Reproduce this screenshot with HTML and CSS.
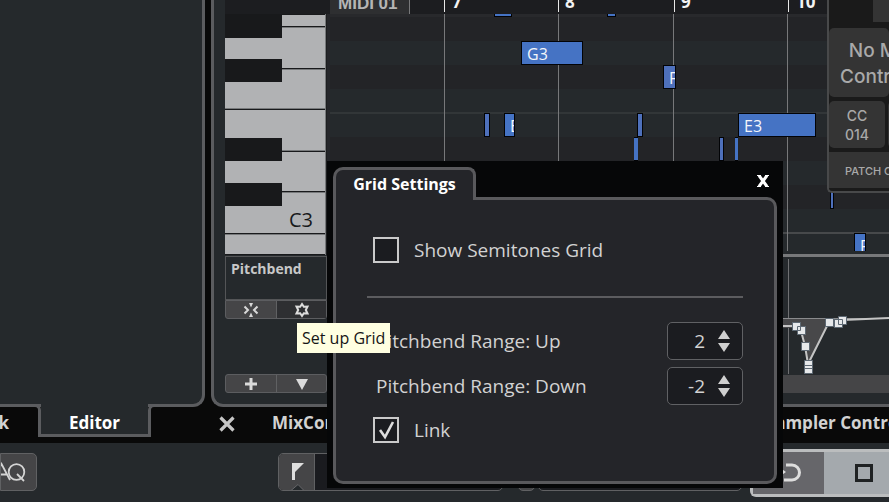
FILE: index.html
```html
<!DOCTYPE html>
<html lang="en">
<head>
<meta charset="utf-8">
<title>Key Editor</title>
<link rel="stylesheet" href="styles.css">
</head>
<body>
<main class="workspace">
  <section class="dock dock-left">
    <div class="dock-body"></div>
    <nav class="dock-tabs">
      <button class="tab tab-prev">Track</button>
      <button class="tab tab-active">Editor</button>
      <span class="tab-rest"></span>
    </nav>
  </section>
  <section class="dock dock-right">
    <div class="editor">
      <div class="ruler">
        <span class="part-name">MIDI 01</span>
        <svg class="ruler-scale" width="480" height="14" aria-hidden="true">
          <g fill="#e8e8e8"><path d="M34 0h1v12h-1zM148 0h1v12h-1zM264 0h1v12h-1zM378 0h1v12h-1z"/></g>
          <g class="ruler-num"><text x="42" y="8">7</text><text x="155" y="8">8</text><text x="271" y="8">9</text><text x="386" y="8">10</text></g>
        </svg>
      </div>
      <svg class="keys" width="102" height="241" aria-label="Piano keyboard">
        <path fill="#b1b2b4" d="M0 0h102v241H0z"/>
        <path fill="#18191b" d="M0 0h102v1H0zM57 12h45v1H57zM57 54h45v1H57zM0 95h102v1H0zM57 137h45v1H57zM57 177h45v1H57zM0 219h102v1H0zM0 240h102v1H0z"/>
        <path fill="#77797b" d="M57 13h45v1H57zM57 55h45v1H57zM0 94h102v1H0zM57 136h45v1H57zM57 178h45v1H57zM0 220h102v1H0zM100 0h1v241h-1z"/>
        <path fill="#1d1e20" d="M101 0h1v241h-1z"/>
        <path fill="#18191b" d="M0 1h57v23H0zM0 45h57v23H0zM0 124h57v23H0zM0 169h57v23H0z"/>
        <text class="key-name" x="64" y="213">C3</text>
      </svg>
      <div class="roll">
        <i class="bar" style="left:118px"></i><i class="bar" style="left:232px"></i><i class="bar" style="left:347px"></i><i class="bar" style="left:461px"></i>
        <span class="note note-cut" style="left:167px;top:-8px;width:18px;height:11px"></span>
        <span class="note note-cut" style="left:280px;top:-8px;width:9px;height:11px"></span>
        <span class="note" style="left:194px;top:27px;width:62px">G3</span>
        <span class="note note-soft" style="left:336px;top:51px;width:13px">F3</span>
        <span class="note note-plain" style="left:157px;top:99px;width:6px"></span>
        <span class="note" style="left:177px;top:99px;width:11px">E3</span>
        <span class="note note-plain" style="left:310px;top:99px;width:6px"></span>
        <span class="note note-flat" style="left:307px;top:123px;width:4px"></span>
        <span class="note" style="left:411px;top:99px;width:78px">E3</span>
        <span class="note note-plain" style="left:392px;top:123px;width:5px"></span>
        <span class="note note-flat" style="left:408px;top:123px;width:3px"></span>
        <span class="note note-plain" style="left:503px;top:171px;width:4px"></span>
        <span class="note" style="left:527px;top:219px;width:12px">F2</span>
      </div>
      <div class="lane-head">
        <div class="lane-name">Pitchbend</div>
        <div class="pair">
          <button aria-label="Snap pitchbend events"><svg width="16" height="16" viewBox="0 0 16 16" fill="none" stroke="#d8d8d8" stroke-width="2"><path d="M1.500 4.500L5 8l-3.500 3.500M14.500 4.500L11 8l3.500 3.500"/><path fill="#d8d8d8" stroke="none" d="M6 1h4L8 5.500zM6 15h4L8 10.500z"/></svg></button>
          <button class="dark" aria-label="Set up Grid"><svg width="16" height="16" viewBox="0 0 16 16"><path fill="none" stroke="#dcdcdc" stroke-width="2" d="M8 2l1.800 2.700 3.700-.2L11.800 8l1.700 3.500-3.700-.2L8 14l-1.800-2.700-3.700.2L4.200 8 2.500 4.500l3.700.2z"/></svg></button>
        </div>
        <div class="pair pair-end">
          <button aria-label="Add lane"><svg width="14" height="14"><path fill="#dadada" d="M5.500 1h3v4.500H13v3H8.500V13h-3V8.500H1v-3h4.500z"/></svg></button>
          <button aria-label="Lane menu"><svg width="14" height="14"><path fill="#dadada" d="M1 2h12L7 13z"/></svg></button>
        </div>
      </div>
      <div class="lane">
        <svg class="curve" width="562" height="115" aria-hidden="true">
          <path fill="#6f7072" d="M461 0h1v115h-1z"/>
          <path fill="#48484a" d="M455 59h64l-8 5h-9l-21 43-3-18-4-15-5-5h-14z"/>
          <path stroke="#8a8b8d" d="M0 59.500h562"/>
          <path fill="none" stroke="#c4c4c4" stroke-width="2" d="M440 67h29l5 5 4 15 3 18 21-42 9 1 5-3 46-2"/>
          <g fill="#e6e8ea" stroke="#5d6873"><path d="M465.500 63.500h8v8h-8zM470.500 67.500h8v8h-8zM474.500 83.500h8v8h-8zM477.500 106.500h8v8h-8zM477.500 101.500h8v8h-8zM498.500 59.500h8v8h-8zM507.500 60.500h8v8h-8zM511.500 57.500h8v8h-8z"/></g>
        </svg>
        <div class="scroll"></div>
      </div>
    </div>
    <nav class="zone-tabs">
      <button class="close-zone" aria-label="Close zone"><svg width="16" height="16"><path stroke="#c6c6c6" stroke-width="3.200" d="M1.500 1.500l13 13M14.500 1.500l-13 13"/></svg></button>
      <button class="zone-tab">MixConsole</button>
      <button class="zone-tab zone-sampler">Sampler Control</button>
    </nav>
  </section>
</main>
<footer class="transport">
  <button class="aq" aria-label="Automatic quantize"><svg width="42" height="26" fill="none" stroke="#d4d4d4" stroke-width="1.800"><path d="M2 20L10.500 4 19 20M5.500 14.500h10"/><circle cx="25.500" cy="12" r="7.800"/><path d="M26 14l7 7"/></svg></button>
  <div class="locator">
    <button class="flag" aria-label="Left locator"><svg width="36" height="36"><path fill="#dedede" d="M13 9h12l-9 9v8h-3z"/><path fill="#25292c" stroke="#66676a" d="M12 36.500l7-6 6 6"/></svg></button>
    <span class="readout"></span>
  </div>
  <span class="knob"></span>
  <div class="readout-wide"></div>
  <div class="play-group">
    <button class="cycle" aria-label="Cycle"><svg width="40" height="24"><path fill="none" stroke="#ddd" stroke-width="3" d="M17 4h6a7.500 7.500 0 0 1 0 15h-8"/><path fill="#ddd" d="M10 6l7 5-7 5z"/></svg></button>
    <button class="stop" aria-label="Stop"><svg width="18" height="18"><path fill="none" stroke="#1f2223" stroke-width="3" d="M1.500 1.500h15v15h-15z"/></svg></button>
  </div>
</footer>

<aside class="controller">
  <div class="ctl-top"><span></span></div>
  <div class="ctl-display"><p>No MIDI<br>Controller</p></div>
  <div class="ctl-keys"><button>CC<br>014</button><button>CC<br>015</button></div>
  <div class="ctl-foot">PATCH CHANGE</div>
</aside>

<form class="dialog" aria-labelledby="dlg-title">
  <header class="dlg-head">
    <h1 class="dlg-tab" id="dlg-title">Grid Settings</h1>
    <button type="button" class="dlg-close" aria-label="Close"><svg width="12" height="12" viewBox="0 0 12 12"><path stroke="#fff" stroke-width="3" d="M2 .5l8 11M10 .5l-8 11"/><path stroke="#fff" d="M0 .5h4M8 .5h4M0 11.500h4M8 11.500h4"/></svg></button>
  </header>
  <div class="dlg-body">
    <label class="check check-first"><input type="checkbox">Show Semitones Grid</label>
    <hr>
    <div class="field"><label for="up">Pitchbend Range: Up</label><span class="spin"><input id="up" type="text" value="2"><svg width="14" height="24"><path fill="#cfcfcf" d="M1 10L7 1l6 9zM1 14l6 9 6-9z"/></svg></span></div>
    <div class="field"><label for="down">Pitchbend Range: Down</label><span class="spin"><input id="down" type="text" value="-2"><svg width="14" height="24"><path fill="#cfcfcf" d="M1 10L7 1l6 9zM1 14l6 9 6-9z"/></svg></span></div>
    <label class="check check-last"><input type="checkbox" checked><svg class="tick" width="18" height="20"><path fill="none" stroke="#ddd" stroke-width="2.600" d="M2 10l5 7L15 2"/></svg>Link</label>
  </div>
</form>
<div class="tooltip" role="tooltip">Set up Grid</div>
</body>
</html>
```
FILE: styles.css
```css
* { box-sizing: border-box; }
body {
  margin: 0;
  background: #090909;
  color: #d2d2d2;
  font-family: "Open Sans", "Noto Sans", sans-serif;
  overflow: hidden;
}
button { border: 0; padding: 0; margin: 0; background: none; color: inherit; font: inherit; }
svg { display: block; flex: none; }

.workspace { display: flex; gap: 6px; }
.dock-left { width: 205px; flex: none; }
.dock-body {
  height: 407px;
  background: #25292c;
  border: solid #5b5c5f;
  border-width: 0 3px 3px 0;
  border-radius: 0 0 12px 0;
}
.dock-tabs { display: flex; height: 33px; margin-top: -3px; font-size: 17px; font-weight: 700; }
.tab { line-height: 32px; }
.tab-prev {
  width: 41px;
  display: flex;
  justify-content: flex-end;
  padding-right: 29px;
  background: #090909;
  border: solid #5b5c5f;
  border-width: 3px 3px 0 0;
  border-radius: 0 6px 0 0;
}
.tab-active {
  width: 107px;
  padding-top: 3px;
  background: #25292c;
  border-bottom: 3px solid #5b5c5f;
  color: #fff;
}
.tab-rest {
  width: 20px;
  background: #090909;
  border: solid #5b5c5f;
  border-width: 3px 0 0 3px;
  border-radius: 6px 0 0 0;
}

.dock-right { flex: 1; min-width: 0; }
.editor {
  display: grid;
  grid-template-columns: 102px 1fr;
  grid-template-rows: 14px 241px 138px;
  padding: 0 0 11px 11px;
  background: #25292c;
  border: solid #5b5c5f;
  border-width: 0 0 3px 3px;
  border-radius: 0 0 0 12px;
}
.ruler { grid-column: 1 / 3; display: flex; background: #1c1d20; overflow: hidden; padding-left: 105px; }
.part-name {
  width: 80px;
  flex: none;
  padding-left: 8px;
  background: #2e2f31;
  border-right: 1px solid #77787a;
  color: #b5b5b5;
  font: 700 17px/24px "Liberation Sans", sans-serif;
  margin-top: -8px;
}
.ruler-num { font-size: 17px; font-weight: 700; fill: #f2f2f2; }
.key-name { font-size: 20px; fill: #18191b; }

.roll {
  position: relative;
  overflow: hidden;
  height: 237px;
  border-left: 3px solid #25262a;
  background: linear-gradient(
    #28292c 3px, #232427 3px 27px, #25292c 27px 51px, #232427 51px 75px, #25292c 75px 98px,
    #323638 98px 100px, #25292c 100px 123px, #232427 123px 147px, #25292c 147px 171px,
    #232427 171px 195px, #25292c 195px 218px, #47494b 218px 220px, #25292c 220px);
}
.bar { position: absolute; top: 0; bottom: 0; width: 1px; margin-left: -4px; background: #77787a; }
.note {
  position: absolute;
  height: 24px;
  margin-left: -3px;
  padding-left: 5px;
  overflow: hidden;
  background: #4573c4;
  border: 1px solid #020306;
  color: #f4f6fa;
  font-size: 16px;
  line-height: 24px;
}
.note-soft, .note-plain { background: #4e70bb; }
.note-plain { padding: 0; }
.note-flat { padding: 0; border-width: 1px 0; }
.note-cut { padding: 0; }

.lane-head { display: flex; flex-direction: column; padding-top: 1px; }
.lane-name {
  height: 44px;
  padding-left: 5px;
  border: 1px solid #545557;
  color: #c8c8c8;
  font-size: 14px;
  font-weight: 700;
  line-height: 24px;
}
.pair { display: grid; grid-template-columns: 1fr 1fr; height: 19px; background: #454547; border: 1px solid #5c5d60; border-radius: 0 0 3px 3px; }
.pair button { display: grid; place-items: center; min-height: 0; }
.pair button + button { border-left: 1px solid #606163; }
.pair .dark { background: #2e2f32; }
.pair-end { margin-top: auto; border-radius: 3px; }

.lane { display: flex; flex-direction: column; justify-content: space-between; overflow: hidden; border-top: 3px solid #77787a; margin-top: -1px; }
.curve { margin-top: 2px; }
.scroll { height: 18px; background: #454547; }

.zone-tabs { display: flex; align-items: center; height: 36px; padding-left: 8px; font-size: 17px; font-weight: 700; white-space: nowrap; }
.zone-tab { margin: -4px 0 0 37px; line-height: 32px; }
.zone-sampler { margin-left: 396px; }
.close-zone { margin-top: -2px; }

.transport { display: flex; align-items: flex-start; height: 59px; background: #25292c; }
.aq {
  width: 37px;
  height: 38px;
  margin-top: 10px;
  display: flex;
  justify-content: flex-end;
  align-items: center;
  background: #454547;
  border: 1px solid #606163;
  border-radius: 0 5px 5px 0;
  overflow: hidden;
}
.aq svg { margin: 2px 3px 0 0; }
.locator { display: flex; width: 225px; height: 38px; margin: 10px 0 0 241px; background: #1a1b1f; border: 1px solid #606163; border-radius: 5px; }
.flag { width: 36px; background: #454547; border-right: 1px solid #606163; border-radius: 4px 0 0 4px; }
.knob { width: 17px; height: 38px; margin: 10px 3px 0 15px; background: #454547; border: 1px solid #606163; border-radius: 5px; }
.readout-wide { width: 204px; height: 38px; margin-top: 10px; background: #1a1b1f; border: 1px solid #606163; border-radius: 5px; }
.play-group { flex: 1; display: flex; height: 48px; margin: 6px 0 0 8px; border: solid #bbbdbe; border-width: 3px 0 3px 3px; border-radius: 6px 0 0 6px; }
.cycle { width: 71px; background: #66666a; display: grid; place-items: center; }
.stop { flex: 1; background: #a4a9ad; padding-left: 31px; }

.controller {
  position: absolute;
  left: 827px;
  right: 0;
  top: 0;
  height: 193px;
  overflow: hidden;
  background: #1a1a1a;
  border: solid #48494a;
  border-width: 0 0 2px 2px;
  border-radius: 0 0 0 5px;
  color: #a9a9a9;
  font-family: Inter, Roboto, sans-serif;
  font-weight: 500;
  white-space: nowrap;
}
.ctl-top { height: 28px; padding-left: 44px; }
.ctl-top span { display: block; height: 22px; background: #343434; }
.ctl-display { height: 69px; padding-top: 10px; background: #343434; border-radius: 5px; font-size: 19px; line-height: 26px; }
.ctl-display p { width: 112px; margin: 0; text-align: center; }
.ctl-keys { display: flex; gap: 3px; margin: 4px 0; }
.ctl-keys button { flex: none; width: 56px; height: 47px; border-radius: 5px; background: #343434; font-size: 14px; line-height: 19px; }
.ctl-foot { height: 36px; padding-left: 16px; background: #343434; font-size: 11px; line-height: 38px; }

.dialog { position: absolute; left: 327px; top: 161px; width: 456px; padding: 6px 6px 4px; background: #060708; font-size: 19px; }
.dlg-head { display: flex; justify-content: space-between; height: 30px; }
.dlg-tab {
  position: relative;
  z-index: 1;
  width: 143px;
  height: 33px;
  margin: 0;
  background: #242529;
  border: solid #59595c;
  border-width: 3px 3px 0 3px;
  border-radius: 10px 8px 0 0;
  color: #fff;
  font-size: 16px;
  line-height: 28px;
  text-align: center;
  white-space: nowrap;
}
.dlg-close { width: 12px; height: 12px; margin: 8px 8px 0 0; }
.dlg-body { height: 287px; padding: 37px 31px 0; background: #242529; border: 3px solid #59595c; border-radius: 0 10px 10px 10px; }
.check { display: flex; align-items: center; gap: 15px; height: 26px; margin: 5px 0 0 6px; position: relative; }
.check-first { margin-top: 0; }
.check input { appearance: none; width: 26px; height: 26px; margin: 0; background: #1b1c20; border: 2px solid #cacaca; }
.tick { position: absolute; left: 5px; top: 3px; }
hr { height: 2px; margin: 33px 0 23px; border: 0; background: #5c5c5f; }
.field { display: flex; align-items: center; justify-content: space-between; height: 39px; margin-bottom: 6px; padding-left: 9px; }
.check-last { margin-top: 12px; }
.spin { display: flex; align-items: center; width: 76px; height: 38px; padding-right: 11px; background: #1b1c20; border: 1px solid #606164; border-radius: 5px; }
.spin input { flex: 1; width: 0; min-width: 0; padding: 0 12px 0 0; border: 0; background: none; color: #d2d2d2; font: inherit; text-align: right; }
.tooltip { position: absolute; left: 297px; top: 323px; width: 93px; height: 30px; padding-left: 5px; background: #ffffe1; color: #151515; font-size: 16px; line-height: 31px; white-space: nowrap; }
```
